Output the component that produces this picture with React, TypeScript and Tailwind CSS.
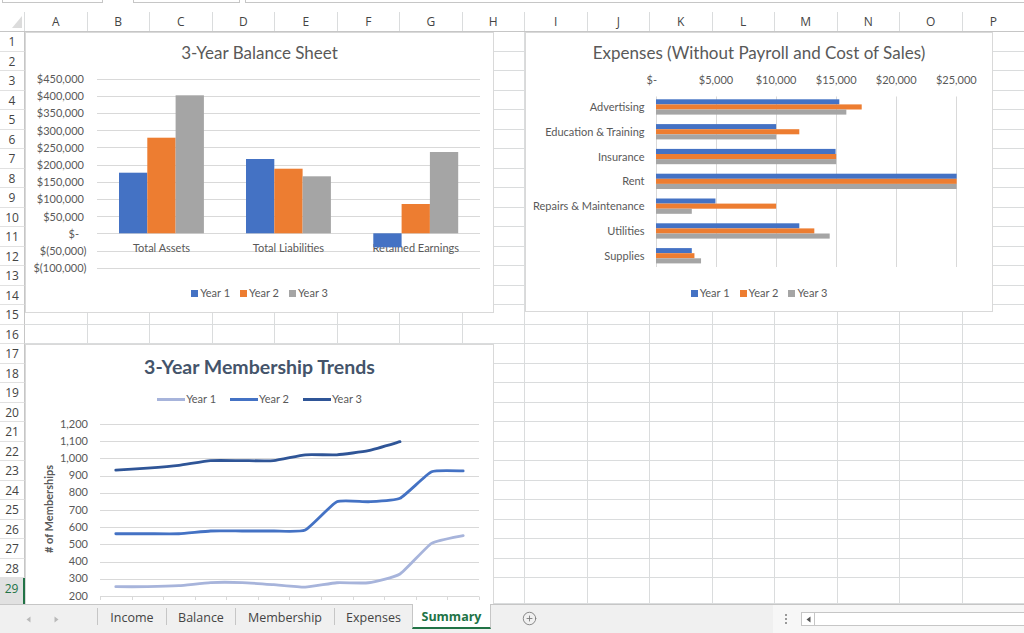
import { CirclePlus } from 'lucide-react';

const COLS = 'ABCDEFGHIJKLMNOP'.split('');
const ROWS = Array.from({ length: 29 }, (_, i) => i + 1);

const BLUE = '#4472C4';
const ORANGE = '#ED7D31';
const GRAY = '#A5A5A5';
const SERIES = [BLUE, ORANGE, GRAY];
const GRID = '#D9D9D9';
const FONT = 'Lato, "Open Sans", sans-serif';

function BarLegend() {
  const items = [
    ['Year 1', 'bg-[#4472C4]'],
    ['Year 2', 'bg-[#ED7D31]'],
    ['Year 3', 'bg-[#A5A5A5]'],
  ];
  return (
    <div className="h-[20px] flex items-center justify-center gap-[10px] text-[11px] text-[#595959] font-['Lato',sans-serif]">
      {items.map(([label, color]) => (
        <div key={label} className="flex items-center gap-[2px]">
          <span className={`w-[7px] h-[7px] ${color}`} />
          <span>{label}</span>
        </div>
      ))}
    </div>
  );
}

function BalanceChart() {
  const top = 78.5;
  const step = 17.2;
  const zero = top + 9 * step;
  const ticks = [
    '$450,000', '$400,000', '$350,000', '$300,000', '$250,000', '$200,000',
    '$150,000', '$100,000', '$50,000', '$-', '$(50,000)', '$(100,000)',
  ];
  // x of the first bar and the top (or bottom, when negative) of each bar, page coords
  const groups = [
    { name: 'Total Assets', x: 119, ends: [172.7, 137.7, 95.3] },
    { name: 'Total Liabilities', x: 246, ends: [159, 168.7, 176.3] },
    { name: 'Retained Earnings', x: 373.3, ends: [247.3, 204, 152] },
  ];
  const bw = 28.3;

  return (
    <div className="absolute left-[25px] top-0 w-[469px] h-[281px] bg-white border border-[#d9d9d9]">
      <div className="h-[40px] flex items-center justify-center text-[17px] text-[#595959] font-['Lato',sans-serif]">
        3-Year Balance Sheet
      </div>
      <svg width="467" height="210" className="block">
        <g transform="translate(-26 -73)" fontFamily={FONT} fontSize="11" fill="#595959">
          {ticks.map((t, i) => {
            const y = Math.round(top + i * step) + 0.5;
            return <line key={t} x1={97} x2={480} y1={y} y2={y} stroke={GRID} strokeWidth="1" />;
          })}
          {ticks.map((t, i) => (
            <text
              key={t}
              x={t.startsWith('$(') ? 86.5 : t === '$-' ? 79 : 84}
              y={top + i * step}
              textAnchor="end"
              dominantBaseline="central"
            >
              {t}
            </text>
          ))}
          {groups.map((g) => (
            <text key={g.name} x={g.x + 42.5} y={247.5} textAnchor="middle" dominantBaseline="central">
              {g.name}
            </text>
          ))}
          {groups.map((g) =>
            g.ends.map((e, j) => (
              <rect
                key={g.name + j}
                x={g.x + j * bw}
                y={Math.min(e, zero)}
                width={bw}
                height={Math.abs(zero - e)}
                fill={SERIES[j]}
              />
            )),
          )}
        </g>
      </svg>
      <BarLegend />
    </div>
  );
}

function ExpensesChart() {
  const x0 = 656;
  const per = 60.06 / 5000;
  const cats: [string, number[]][] = [
    ['Advertising', [15260, 17125, 15845]],
    ['Education & Training', [10000, 11930, 10000]],
    ['Insurance', [14950, 15000, 15000]],
    ['Rent', [25030, 25030, 25030]],
    ['Repairs & Maintenance', [4950, 10000, 2980]],
    ['Utilities', [11930, 13180, 14460]],
    ['Supplies', [2980, 3200, 3750]],
  ];
  const axis = ['$-', '$5,000', '$10,000', '$15,000', '$20,000', '$25,000'];

  return (
    <div className="absolute left-[525px] top-0 w-[468px] h-[280px] bg-white border border-[#d9d9d9]">
      <div className="h-[40px] flex items-center justify-center text-[17px] text-[#595959] font-['Lato',sans-serif]">
        Expenses (Without Payroll and Cost of Sales)
      </div>
      <svg width="466" height="210" className="block">
        <g transform="translate(-526 -73)" fontFamily={FONT} fontSize="11" fill="#595959">
          {axis.map((a, i) => {
            const x = Math.round(x0 + i * 60.06) + 0.5;
            return <line key={a} x1={x} x2={x} y1={96.5} y2={267} stroke={GRID} strokeWidth="1" />;
          })}
          {axis.map((a, i) => (
            <text
              key={a}
              x={i === 0 ? 657 : x0 + i * 60.06}
              y={79.3}
              textAnchor={i === 0 ? 'end' : 'middle'}
              dominantBaseline="central"
            >
              {a}
            </text>
          ))}
          {cats.map(([name, vals], k) => {
            const gy = 99.3 + k * 24.8;
            return (
              <g key={name}>
                <text x={644.5} y={gy + 7.2} textAnchor="end" dominantBaseline="central">
                  {name}
                </text>
                {vals.map((v, j) => (
                  <rect key={j} x={x0} y={gy + j * 5.1} width={v * per} height={5.1} fill={SERIES[j]} />
                ))}
              </g>
            );
          })}
        </g>
      </svg>
      <BarLegend />
    </div>
  );
}

function smoothPath(pts: [number, number][]) {
  const k = 0.08;
  let d = `M${pts[0][0]},${pts[0][1]}`;
  for (let i = 0; i < pts.length - 1; i++) {
    const p0 = pts[i - 1] ?? pts[i];
    const p1 = pts[i];
    const p2 = pts[i + 1];
    const p3 = pts[i + 2] ?? p2;
    const c1x = p1[0] + (p2[0] - p0[0]) * k;
    const c1y = p1[1] + (p2[1] - p0[1]) * k;
    const c2x = p2[0] - (p3[0] - p1[0]) * k;
    const c2y = p2[1] - (p3[1] - p1[1]) * k;
    d += ` C${c1x},${c1y} ${c2x},${c2y} ${p2[0]},${p2[1]}`;
  }
  return d;
}

function MembershipChart() {
  const yv = (v: number) => 424 + (1200 - v) * 0.172;
  const xs = (i: number) => 100 + 31.58 * (i + 0.5);
  const ticks = [1200, 1100, 1000, 900, 800, 700, 600, 500, 400, 300, 200];
  const series = [
    { color: '#A7B4DB', vals: [254, 254, 260, 278, 278, 266, 252, 277, 277, 328, 506, 551] },
    { color: '#4472C4', vals: [562, 562, 562, 578, 578, 578, 584, 748, 748, 768, 922, 927] },
    { color: '#2F5597', vals: [932, 944, 960, 987, 987, 987, 1021, 1021, 1045, 1097] },
  ];
  const legend = [
    ['Year 1', 'bg-[#A7B4DB]'],
    ['Year 2', 'bg-[#4472C4]'],
    ['Year 3', 'bg-[#2F5597]'],
  ];

  return (
    <div className="absolute left-[25px] top-[312px] w-[469px] h-[290px] bg-white border border-[#d9d9d9]">
      <div className="h-[44px] flex items-center justify-center text-[19.5px] font-bold text-[#44546A] font-['Lato',sans-serif]">
        3-Year Membership Trends
      </div>
      <div className="h-[20px] flex items-center justify-center gap-[14px] text-[11px] text-[#595959] font-['Lato',sans-serif]">
        {legend.map(([label, color]) => (
          <div key={label} className="flex items-center gap-[1px]">
            <span className={`w-[28px] h-[3px] ${color}`} />
            <span>{label}</span>
          </div>
        ))}
      </div>
      <svg width="467" height="200" className="block">
        <g transform="translate(-26 -409)" fontFamily={FONT} fontSize="11" fill="#595959">
          {ticks.map((v) => {
            const y = Math.round(yv(v)) + 0.5;
            return <line key={v} x1={100} x2={479} y1={y} y2={y} stroke={GRID} strokeWidth="1" />;
          })}
          {Array.from({ length: 13 }, (_, k) => {
            const x = Math.round(100 + 31.58 * k) + 0.5;
            return <line key={k} x1={x} x2={x} y1={596.5} y2={600} stroke={GRID} strokeWidth="1" />;
          })}
          {ticks.map((v) => (
            <text key={v} x={88} y={yv(v) - 1} textAnchor="end" dominantBaseline="central">
              {v.toLocaleString('en-US')}
            </text>
          ))}
          <text
            transform="translate(48 509) rotate(-90)"
            textAnchor="middle"
            dominantBaseline="central"
            fontWeight="bold"
          >
            # of Memberships
          </text>
          {series.map((s) => (
            <path
              key={s.color}
              d={smoothPath(s.vals.map((v, i) => [xs(i), yv(v)]))}
              fill="none"
              stroke={s.color}
              strokeWidth="2.8"
              strokeLinecap="round"
              strokeLinejoin="round"
            />
          ))}
        </g>
      </svg>
    </div>
  );
}

function Tri({ dir }: { dir: 'left' | 'right' }) {
  return (
    <svg width="5" height="7" viewBox="0 0 5 7">
      <path d={dir === 'left' ? 'M4.5 0.5 L0.5 3.5 L4.5 6.5 Z' : 'M0.5 0.5 L4.5 3.5 L0.5 6.5 Z'} fill="currentColor" />
    </svg>
  );
}

function Sep() {
  return <div className="w-px h-[17px] mt-[3px] bg-[#c6c6c6] shrink-0" />;
}

function SheetTabs() {
  return (
    <div className="h-[29px] shrink-0 flex items-start bg-[#f0f0f0] border-t border-[#c6c6c6] text-[12.5px] text-[#444] font-['Open_Sans',sans-serif]">
      <div className="w-[97px] h-[28px] shrink-0 flex items-center text-[#b9b9b9]">
        <span className="ml-[26px]">
          <Tri dir="left" />
        </span>
        <span className="ml-[23px]">
          <Tri dir="right" />
        </span>
      </div>
      <Sep />
      <div className="w-[68px] h-[27px] shrink-0 flex items-center justify-center">Income</div>
      <Sep />
      <div className="w-[68px] h-[27px] shrink-0 flex items-center justify-center">Balance</div>
      <Sep />
      <div className="w-[98px] h-[27px] shrink-0 flex items-center justify-center">Membership</div>
      <Sep />
      <div className="w-[77px] h-[27px] shrink-0 flex items-center justify-center">Expenses</div>
      <div className="w-[79px] h-[25px] -mt-px shrink-0 flex items-center justify-center pt-[4px] bg-white border-x border-[#c6c6c6] border-b-2 border-b-[#217346] font-bold text-[#217346]">
        Summary
      </div>
      <CirclePlus size={15} strokeWidth={1.4} className="ml-[31px] mt-[6px] shrink-0 text-[#7a7a7a]" />
      <div className="flex-1" />
      <div className="w-[251px] h-[28px] shrink-0 flex items-center bg-[#f7f7f7]">
        <div className="ml-[12px] flex flex-col gap-[2px]">
          <span className="w-[2px] h-[2px] bg-[#9a9a9a]" />
          <span className="w-[2px] h-[2px] bg-[#9a9a9a]" />
          <span className="w-[2px] h-[2px] bg-[#9a9a9a]" />
        </div>
        <div className="ml-[14px] w-[14px] h-[14px] flex items-center justify-center bg-white border border-[#c6c6c6] text-[#555]">
          <Tri dir="left" />
        </div>
        <div className="flex-1 h-[14px] bg-white border-y border-[#c6c6c6]" />
      </div>
    </div>
  );
}

export default function App() {
  return (
    <div className="w-[1024px] h-[633px] flex flex-col overflow-hidden bg-white font-['Open_Sans',sans-serif]">
      {/* bottom edge of the formula bar */}
      <div className="h-[12px] shrink-0 flex items-start">
        <div className="ml-[2px] w-[101px] h-[3px] border-x border-b border-[#c6c6c6]" />
        <div className="ml-[30px] w-[107px] h-[3px] border-x border-b border-[#c6c6c6]" />
        <div className="ml-[5px] flex-1 h-[3px] border-l border-b border-[#c6c6c6]" />
      </div>

      {/* column headers */}
      <div className="h-[20px] shrink-0 flex border-b border-[#c6c6c6] text-[12px] text-[#444]">
        <div className="w-[25px] shrink-0 border-r border-[#dadcdd] flex items-end justify-end pr-[2px] pb-[3px]">
          <svg width="10" height="12" viewBox="0 0 10 12">
            <path d="M10 0 L10 12 L0 12 Z" fill="#dcdcdc" />
          </svg>
        </div>
        {COLS.map((c) => (
          <div key={c} className="w-[62.5px] shrink-0 border-r border-[#dadcdd] flex items-center justify-center">
            {c}
          </div>
        ))}
      </div>

      {/* cells */}
      <div className="flex-1 relative overflow-hidden flex flex-col">
        {ROWS.map((r) => (
          <div key={r} className={r === 29 ? 'flex flex-1' : 'flex h-[19.5px] shrink-0'}>
            <div
              className={
                r === 29
                  ? 'w-[25px] shrink-0 text-center pt-[1px] leading-[19.5px] text-[12px] bg-[#e1e1e1] text-[#217346] border-r-2 border-[#217346]'
                  : 'w-[25px] shrink-0 text-center leading-[19px] text-[12px] text-[#444] border-r border-b border-r-[#c6c6c6] border-b-[#e1e1e1]'
              }
            >
              {r}
            </div>
            {COLS.map((c) => (
              <div key={c} className="w-[62.5px] shrink-0 border-r border-b border-[#dadcdd]" />
            ))}
          </div>
        ))}

        <BalanceChart />
        <ExpensesChart />
        <MembershipChart />
      </div>

      <SheetTabs />
    </div>
  );
}
